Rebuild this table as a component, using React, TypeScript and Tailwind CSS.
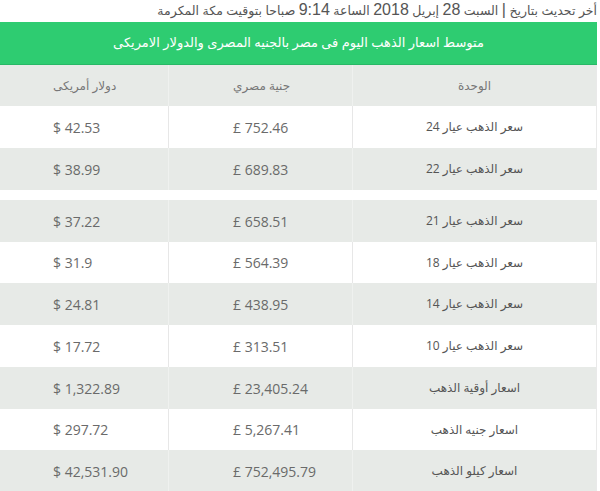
import React from "react";

type Row = { unit: string; egp: string; usd: string; gray: boolean; h: string };

const table1: Row[] = [
  { unit: "سعر الذهب عيار 24", egp: "£ 752.46", usd: "$ 42.53", gray: false, h: "h-[42px]" },
  { unit: "سعر الذهب عيار 22", egp: "£ 689.83", usd: "$ 38.99", gray: true, h: "h-[42px]" },
];

const table2: Row[] = [
  { unit: "سعر الذهب عيار 21", egp: "£ 658.51", usd: "$ 37.22", gray: true, h: "h-[42px]" },
  { unit: "سعر الذهب عيار 18", egp: "£ 564.39", usd: "$ 31.9", gray: false, h: "h-[41px]" },
  { unit: "سعر الذهب عيار 14", egp: "£ 438.95", usd: "$ 24.81", gray: true, h: "h-[42px]" },
  { unit: "سعر الذهب عيار 10", egp: "£ 313.51", usd: "$ 17.72", gray: false, h: "h-[42px]" },
  { unit: "اسعار أوقية الذهب", egp: "£ 23,405.24", usd: "$ 1,322.89", gray: true, h: "h-[42px]" },
  { unit: "اسعار جنيه الذهب", egp: "£ 5,267.41", usd: "$ 297.72", gray: false, h: "h-[41px]" },
  { unit: "اسعار كيلو الذهب", egp: "£ 752,495.79", usd: "$ 42,531.90", gray: true, h: "h-[42px]" },
];

function DataRow({ r }: { r: Row }) {
  const bg = r.gray ? "bg-[#e7eae7]" : "bg-white";
  const bc = r.gray ? "border-[#eff1ef]" : "border-[#e7e7e7]";
  return (
    <div className={`grid grid-cols-[244px_184px_169px] ${r.h} ${bg}`}>
      <div className={`flex items-center justify-center border-l ${bc} text-[12px] text-[#555]`}>
        <span>{r.unit}</span>
      </div>
      <div className={`flex items-center justify-end pl-[64px] border-l ${bc}`}>
        <span dir="ltr" className="w-full text-left text-[14px] text-[#6a6a6a]">{r.egp}</span>
      </div>
      <div className="flex items-center justify-end pl-[54px]">
        <span dir="ltr" className="w-full text-left text-[14px] text-[#6a6a6a]">{r.usd}</span>
      </div>
    </div>
  );
}

export default function App() {
  return (
    <div className="w-[600px] h-[491px] overflow-hidden bg-white" style={{ fontFamily: '"Open Sans", "DejaVu Sans", sans-serif' }}>
      <div dir="rtl" className="w-[597px]">
        <div
          className="h-[22px] text-[12.5px] leading-[20px] text-[#555] whitespace-nowrap"
          style={{ fontFamily: '"Liberation Sans", "DejaVu Sans", sans-serif' }}
        >
          أخر تحديث بتاريخ <span className="text-[16px]">|</span> السبت <span className="text-[16px]">28</span> إبريل{" "}
          <span className="text-[16px]">2018</span> الساعة <span className="text-[16px]">9:14</span> صباحا بتوقيت مكة المكرمة
        </div>
        <div className="h-[43px] bg-[#2ecc71] border-b border-[#28b866] flex items-center justify-center text-white text-[13px]">
          متوسط اسعار الذهب اليوم فى مصر بالجنيه المصرى والدولار الامريكى
        </div>
        <div className="border-r border-[#e9e9e9]">
          <div className="grid grid-cols-[244px_184px_169px] h-[41px] bg-[#e7eae7] text-[12px] text-[#777]">
            <div className="flex items-center justify-center border-l border-[#eff1ef]">الوحدة</div>
            <div className="flex items-center justify-end pl-[64px] border-l border-[#eff1ef]">
              <span className="w-full text-left">جنية مصري</span>
            </div>
            <div className="flex items-center justify-end pl-[54px]">
              <span className="w-full text-left">دولار أمريكى</span>
            </div>
          </div>
          {table1.map((r) => (
            <DataRow key={r.unit} r={r} />
          ))}
        </div>
        <div className="h-[10px]" />
        <div className="border-r border-[#e9e9e9]">
          {table2.map((r) => (
            <DataRow key={r.unit} r={r} />
          ))}
        </div>
      </div>
    </div>
  );
}
